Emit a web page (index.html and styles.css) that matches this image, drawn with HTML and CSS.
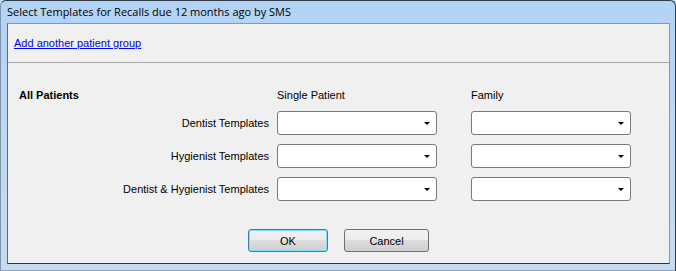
FILE: index.html
```html
<!DOCTYPE html>
<html lang="en">
<head>
  <meta charset="UTF-8" />
  <title>Select Templates</title>
  <link rel="stylesheet" href="styles.css">
</head>
<body>

  <div class="window">
    <div class="titlebar">Select Templates for Recalls due 12 months ago by SMS</div>

    <div class="client">
      <div class="group-bar">
        <a href="#">Add another patient group</a>
      </div>

      <div class="group">
        <div class="group-name">All Patients</div>
        <div class="col-head">Single Patient</div>
        <div class="col-head">Family</div>

        <div class="row-label">Dentist Templates</div>
        <div class="combo"><span class="arrow"></span></div>
        <div class="combo"><span class="arrow"></span></div>

        <div class="row-label">Hygienist Templates</div>
        <div class="combo"><span class="arrow"></span></div>
        <div class="combo"><span class="arrow"></span></div>

        <div class="row-label">Dentist &amp; Hygienist Templates</div>
        <div class="combo"><span class="arrow"></span></div>
        <div class="combo"><span class="arrow"></span></div>
      </div>

      <div class="buttons">
        <button class="btn btn-ok">OK</button>
        <button class="btn btn-cancel">Cancel</button>
      </div>
    </div>
  </div>

</body>
</html>
```

FILE: styles.css
```css
body {
  margin: 0;
  padding: 0;
  font-family: 'Liberation Sans', Arial, sans-serif;
  font-size: 11px;
  color: #000;
  background-color: #c3dbf3;
}
.window {
  box-sizing: border-box;
  width: 676px;
  height: 271px;
  display: flex;
  flex-direction: column;
  padding: 0 5px 6px 6px;
  background: linear-gradient(#b3d3f5, #bcd7f2 40%, #c6dcf0);
  border: 1px solid #2f3b48;
  border-left-color: #7f95ab;
  border-bottom-color: #8ea4ba;
  border-radius: 6px 6px 0 0;
}
.titlebar {
  height: 22px;
  line-height: 22px;
  font-family: 'Open Sans', 'Liberation Sans', sans-serif;
  font-size: 11px;
  color: #000;
  white-space: nowrap;
}
.client {
  flex: 1;
  background-color: #f0f0f0;
  border: 1px solid #8e969e;
  border-left-color: #5e6a77;
  border-bottom-color: #2d3238;
}
.group-bar {
  height: 38px;
  line-height: 38px;
  padding-left: 6px;
  border-bottom: 1px solid #a6a6a6;
}
.group-bar a {
  color: #0000ee;
  text-decoration: underline;
}
.group {
  display: grid;
  grid-template-columns: 258px 194px 160px;
  grid-template-rows: 14px;
  grid-auto-rows: 24px;
  row-gap: 9px;
  padding: 25px 0 0 11px;
}
.group-name {
  font-weight: bold;
  line-height: 14px;
}
.col-head {
  line-height: 14px;
}
.row-label {
  align-self: center;
  text-align: right;
  padding-right: 8px;
}
.combo {
  position: relative;
  box-sizing: border-box;
  width: 160px;
  height: 24px;
  background-color: #fff;
  border: 1px solid #7a7a7a;
  border-radius: 3px;
}
.combo .arrow {
  position: absolute;
  right: 6px;
  top: 10px;
  width: 0;
  height: 0;
  border-left: 3px solid transparent;
  border-right: 3px solid transparent;
  border-top: 3px solid #000;
}
.buttons {
  display: flex;
  justify-content: center;
  gap: 16px;
  margin-top: 28px;
}
.btn {
  box-sizing: border-box;
  height: 23px;
  padding: 0;
  font-family: 'Liberation Sans', Arial, sans-serif;
  font-size: 11px;
  color: #000;
  border: 1px solid #707070;
  border-radius: 3px;
  background: linear-gradient(#f2f2f2, #ebebeb 50%, #dddddd 50%, #cfcfcf);
}
.btn-ok {
  width: 80px;
  border-color: #3c7fb1;
  box-shadow: inset 0 0 0 1px #7fdcf5;
}
.btn-cancel {
  width: 85px;
}
```
